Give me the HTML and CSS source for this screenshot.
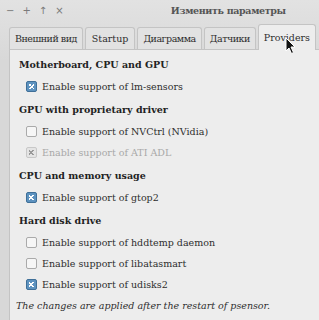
FILE: index.html
```html
<!DOCTYPE html>
<html lang="ru">
<head>
    <meta charset="UTF-8">
    <title>Изменить параметры</title>
    <link rel="stylesheet" href="styles.css">
</head>
<body>
    <div class="titlebar">
        <div class="controls">
            <span>&minus;</span>
            <span>+</span>
            <span>&uarr;</span>
            <span>&times;</span>
        </div>
        <div class="title">Изменить параметры</div>
    </div>

    <div class="tabs">
        <div class="tab ru">Внешний вид</div>
        <div class="tab">Startup</div>
        <div class="tab ru">Диаграмма</div>
        <div class="tab ru">Датчики</div>
        <div class="tab active">Providers</div>
    </div>

    <div class="panel">
        <div class="heading">Motherboard, CPU and GPU</div>
        <label class="option"><span class="box checked"></span>Enable support of lm-sensors</label>

        <div class="heading">GPU with proprietary driver</div>
        <label class="option"><span class="box"></span>Enable support of NVCtrl (NVidia)</label>
        <label class="option disabled"><span class="box checked"></span>Enable support of ATI ADL</label>

        <div class="heading">CPU and memory usage</div>
        <label class="option"><span class="box checked"></span>Enable support of gtop2</label>

        <div class="heading">Hard disk drive</div>
        <label class="option"><span class="box"></span>Enable support of hddtemp daemon</label>
        <label class="option"><span class="box"></span>Enable support of libatasmart</label>
        <label class="option"><span class="box checked"></span>Enable support of udisks2</label>

        <div class="note">The changes are applied after the restart of psensor.</div>
    </div>

    <svg class="cursor" width="12" height="18" viewBox="0 0 12 18">
        <path d="M1 1 L1 14 L4 11 L6.5 16.5 L8.5 15.5 L6 10 L10 10 Z" fill="#111" stroke="#fff" stroke-width="1"/>
    </svg>
</body>
</html>
```

FILE: styles.css
```css
body {
    margin: 0;
    width: 319px;
    height: 320px;
    overflow: hidden;
    font-family: "DejaVu Serif", serif;
    font-size: 9.5px;
    color: #2e2e2e;
    background: linear-gradient(to bottom, #e2e2e2, #d8d8d8 60px);
    position: relative;
}
.titlebar {
    display: flex;
    align-items: center;
    height: 20px;
    padding: 0 6px;
}
.controls {
    display: flex;
    gap: 8px;
    color: #7a7a7a;
    font-family: "DejaVu Sans", sans-serif;
    font-size: 10px;
}
.title {
    flex: 1;
    text-align: center;
    padding-left: 80px;
    font-weight: bold;
    letter-spacing: -0.35px;
    color: #555;
}
.tabs {
    display: flex;
    align-items: flex-end;
    gap: 2px;
    height: 29px;
    padding-left: 9px;
    white-space: nowrap;
}
.tab {
    flex-shrink: 0;
    height: 21px;
    line-height: 21px;
    padding: 0 6px;
    background: #e2e2e2;
    border: 1px solid #c4c4c4;
    border-bottom: none;
    border-radius: 3px 3px 0 0;
}
.tab.ru {
    padding: 0 5px;
    letter-spacing: -0.5px;
}
.tab.active {
    height: 25px;
    line-height: 25px;
    padding: 0 5px;
    background: #ededed;
    position: relative;
    top: 1px;
}
.panel {
    margin-left: 9px;
    height: 280px;
    background: #ededed;
    border-top: 1px solid #c4c4c4;
    border-left: 1px solid #c4c4c4;
    padding: 4px 0 0 9px;
}
.heading {
    font-weight: bold;
    color: #222;
    height: 22px;
    line-height: 22px;
}
.option {
    display: flex;
    align-items: center;
    gap: 5px;
    height: 21px;
    padding-left: 7px;
}
.option + .heading {
    margin-top: 2px;
}
.box {
    width: 9px;
    height: 9px;
    border: 1px solid #aaa;
    border-radius: 2px;
    background: #f6f6f6;
    position: relative;
}
.box.checked {
    background: #5d92bf;
    border-color: #3f6f98;
}
.box.checked::after {
    content: "";
    position: absolute;
    left: 2px;
    top: 2px;
    width: 5px;
    height: 5px;
    background:
        linear-gradient(45deg, transparent 40%, #fff 40%, #fff 60%, transparent 60%),
        linear-gradient(-45deg, transparent 40%, #fff 40%, #fff 60%, transparent 60%);
}
.option.disabled {
    color: #a8a8a8;
}
.option.disabled .box {
    background: #e4e4e4;
    border-color: #c8c8c8;
}
.option.disabled .box::after {
    background:
        linear-gradient(45deg, transparent 40%, #999 40%, #999 60%, transparent 60%),
        linear-gradient(-45deg, transparent 40%, #999 40%, #999 60%, transparent 60%);
}
.note {
    font-style: italic;
    margin-left: -3px;
    height: 22px;
    line-height: 22px;
}
.cursor {
    position: absolute;
    left: 285px;
    top: 37px;
}
```
